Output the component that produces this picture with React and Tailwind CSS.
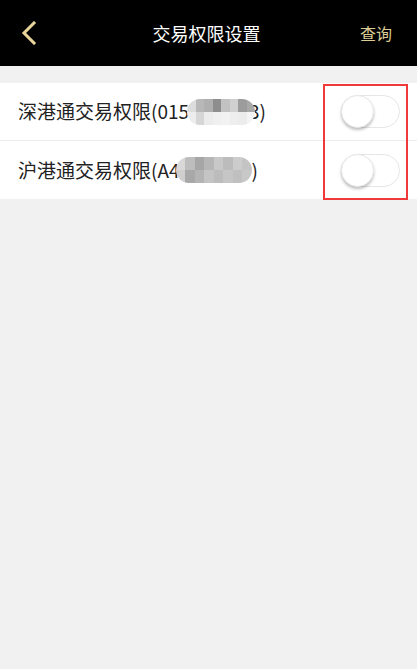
import React from 'react';

const font = { fontFamily: '"Noto Sans CJK SC", "Noto Sans", sans-serif' };

// pixelated mask over the account number
const Mosaic = ({ top, bottom, className }) => (
  <span className={`inline-flex flex-col overflow-hidden rounded-full blur-[0.6px] align-middle ${className}`}>
    <span className="flex h-[13px]">
      {top.map((c, i) => (
        <span key={i} className="flex-1" style={{ backgroundColor: c }} />
      ))}
    </span>
    <span className="flex h-[13px]">
      {bottom.map((c, i) => (
        <span key={i} className="flex-1" style={{ backgroundColor: c }} />
      ))}
    </span>
  </span>
);

const Toggle = () => (
  <div className="relative w-[59px] h-[33px] rounded-full bg-white border border-[#e6e6e6]">
    <div className="absolute -left-[1px] -top-[1px] w-[33px] h-[33px] rounded-full bg-white border border-[#e8e8e8] shadow-[0_2px_3px_rgba(0,0,0,0.25)]" />
  </div>
);

const rows = [
  {
    prefix: '深港通交易权限(015',
    suffix: '3)',
    mask: 'w-[68px] -mr-[6px] -ml-[2px]',
    top: ['#dcdcdc', '#b8b8b8', '#b0b0b0', '#8e8e8e', '#c2c2c2', '#d0d0d0', '#9c9c9c', '#a8a8a8'],
    bottom: ['#ededed', '#d6d6d6', '#ececec', '#f0f0f0', '#f2f2f2', '#eeeeee', '#ececec', '#f4f4f4'],
  },
  {
    prefix: '沪港通交易权限(A4',
    suffix: ')',
    mask: 'w-[76px] -ml-[4px]',
    top: ['#d8d8d8', '#bdbdbd', '#a6a6a6', '#b6b6b6', '#c8c8c8', '#bcbcbc', '#cccccc', '#c4c4c4'],
    bottom: ['#cfcfcf', '#a8a8a8', '#b4b4b4', '#c4c4c4', '#bcbcbc', '#c6c6c6', '#c0c0c0', '#c8c8c8'],
  },
];

export default function App() {
  return (
    <div className="w-[417px] h-[669px] bg-[#f1f1f1] relative" style={font}>
      <div className="h-[66px] bg-black flex items-center px-[20px]">
        <svg width="16" height="24" viewBox="0 0 16 24" className="ml-[1px]">
          <path d="M13 2 L3 12 L13 22" fill="none" stroke="#e8d59c" strokeWidth="3" strokeLinecap="square" />
        </svg>
        <div className="flex-1 text-center text-white text-[18px] pl-[16px]">交易权限设置</div>
        <div className="text-[#dccb95] text-[16px] mr-[5px]">查询</div>
      </div>

      <div className="mt-[17px] bg-white">
        {rows.map((r, i) => (
          <div
            key={i}
            className={`h-[58px] flex items-center pl-[18px] pr-[17px] ${i === 0 ? 'border-b border-[#ececec]' : ''}`}
          >
            <div className="flex-1 flex items-center text-[19px] text-[#222] whitespace-nowrap">
              <span>{r.prefix}</span>
              <Mosaic top={r.top} bottom={r.bottom} className={r.mask} />
              <span>{r.suffix}</span>
            </div>
            <Toggle />
          </div>
        ))}
      </div>

      <div className="absolute left-[323px] top-[84px] w-[85px] h-[116px] border-2 border-[#f03a3a]" />
    </div>
  );
}
